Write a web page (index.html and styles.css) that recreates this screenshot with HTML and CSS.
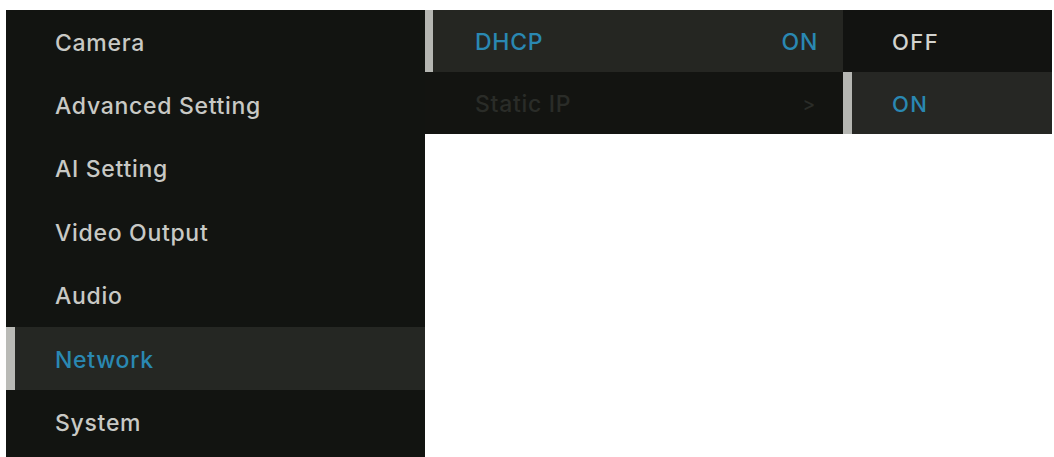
FILE: index.html
```html
<!DOCTYPE html>
<html>
<head>
<meta charset="utf-8">
<link rel="stylesheet" href="styles.css">
</head>
<body>
<div class="screen">
  <ul class="menu">
    <li class="item">Camera</li>
    <li class="item">Advanced Setting</li>
    <li class="item">AI Setting</li>
    <li class="item">Video Output</li>
    <li class="item">Audio</li>
    <li class="item active">Network</li>
    <li class="item">System</li>
  </ul>
  <ul class="submenu">
    <li class="sub active"><span class="label">DHCP</span><span class="value">ON</span></li>
    <li class="sub disabled"><span class="label">Static IP</span><span class="value arrow">&gt;</span></li>
  </ul>
  <ul class="options">
    <li class="opt">OFF</li>
    <li class="opt active">ON</li>
  </ul>
</div>
</body>
</html>
```

FILE: styles.css
```css
* { box-sizing: border-box; }
html, body { margin: 0; padding: 0; background: #ffffff; }
body {
  width: 1054px;
  height: 457px;
  overflow: hidden;
  font-family: Inter, "Noto Sans", "Liberation Sans", sans-serif;
  font-weight: 500;
}
ul { list-style: none; margin: 0; padding: 0; }

.screen {
  display: flex;
  align-items: flex-start;
  padding: 10px 0 0 6px;
}

.menu {
  width: 419px;
  height: 447px;
  background: #121411;
  display: flex;
  flex-direction: column;
}
.item {
  height: 63.4px;
  flex: none;
  display: flex;
  align-items: center;
  font-size: 23px;
  letter-spacing: 0.7px;
  color: #c8c9c5;
  border-left: 9px solid transparent;
  padding-left: 40px;
  padding-top: 2px;
}
.item.active {
  background: #252723;
  border-left-color: #b9bab6;
  color: #2a88b2;
}

.submenu {
  width: 418px;
  background: #131411;
  display: flex;
  flex-direction: column;
}
.sub {
  height: 62px;
  display: flex;
  align-items: center;
  justify-content: space-between;
  padding: 2px 25px 0 42px;
  font-size: 23px;
  letter-spacing: 0.7px;
  border-left: 8px solid transparent;
}
.sub.active {
  background: #252622;
  border-left-color: #b5b6b2;
  color: #2a88b2;
}
.sub.disabled {
  color: #2a2c28;
}
.arrow {
  font-size: 19px;
  margin-right: 2px;
}

.options {
  width: 209px;
  background: #121311;
  display: flex;
  flex-direction: column;
}
.opt {
  height: 62px;
  display: flex;
  align-items: center;
  padding: 2px 0 0 40px;
  font-size: 22px;
  letter-spacing: 1.5px;
  color: #d2d3cf;
  border-left: 9px solid transparent;
}
.opt.active {
  background: #262724;
  border-left-color: #b5b6b2;
  color: #2a88b2;
}
```
